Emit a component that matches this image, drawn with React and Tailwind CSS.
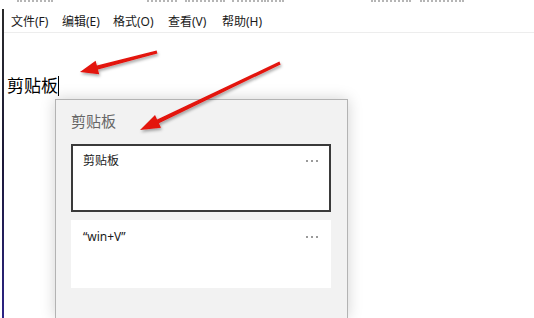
import React from "react";

const menus = [
    { label: "文件(F)", w: "w-[51px]" },
    { label: "编辑(E)", w: "w-[51px]" },
    { label: "格式(O)", w: "w-[55px]" },
    { label: "查看(V)", w: "w-[54px]" },
    { label: "帮助(H)", w: "w-auto" },
];

// faint specks left over from a line of text cut off at the top edge
const specks = [
    [17, 36], [147, 30], [185, 40], [232, 31], [264, 20], [371, 40], [420, 44],
];

function Dots() {
    return (
        <div className="flex gap-[3px] mt-[7px]">
            <span className="w-[2px] h-[2px] bg-[#9a9a9a]" />
            <span className="w-[2px] h-[2px] bg-[#9a9a9a]" />
            <span className="w-[2px] h-[2px] bg-[#9a9a9a]" />
        </div>
    );
}

function ClipCard({ text, active }) {
    return (
        <div
            className={
                "w-[260px] h-[68px] bg-white border-2 flex justify-between pl-[10px] pr-[11px] pt-[7px] " +
                (active ? "border-[#3a3a3a]" : "border-white")
            }
        >
            <span className="text-[12px] leading-[16px] text-[#1a1a1a]">{text}</span>
            <Dots />
        </div>
    );
}

function Arrows() {
    return (
        <svg className="absolute left-0 top-0 pointer-events-none" width="534" height="318">
            <defs>
                <filter id="sh" x="-20%" y="-20%" width="140%" height="160%">
                    <feDropShadow dx="1" dy="2" stdDeviation="1.5" floodColor="#000" floodOpacity="0.35" />
                </filter>
            </defs>
            <g fill="#e3120f" filter="url(#sh)">
                <polygon points="156.6,50.5 96.9,65.6 95.6,60.7 80,72 99.2,74.3 97.9,69.4 157.4,53.5" />
                <polygon points="279.4,61.6 157.1,119.6 155,115.1 140,130 161,127.7 158.9,123.2 280.6,64.4" />
            </g>
        </svg>
    );
}

export default function App() {
    return (
        <div className="relative w-[534px] h-[318px] overflow-hidden bg-white font-['Noto_Sans','Noto_Sans_CJK_SC',sans-serif]">
            <div className="h-[9px] flex items-start">
                {specks.map(([x, w], i) => (
                    <span
                        key={i}
                        style={{ marginLeft: i === 0 ? x : x - specks[i - 1][0] - specks[i - 1][1], width: w }}
                        className="h-[2px] border-b-2 border-dotted border-[#b5b5b5]"
                    />
                ))}
            </div>
            <div className="flex h-[309px]">
                <div className="ml-[2px] w-[2px] h-full bg-gradient-to-b from-[#2a2a2a] via-[#1c1838] to-[#2c2386]" />
                <div className="flex-1 flex flex-col">
                    <div className="h-[24px] flex items-center pt-[2px] pl-[7px] border-b border-[#ededed] text-[12px] text-[#1a1a1a]">
                        {menus.map((m) => (
                            <span key={m.label} className={m.w}>{m.label}</span>
                        ))}
                    </div>
                    <div className="mt-[42px] ml-[3px] flex items-center h-[22px]">
                        <span className="text-[17px] leading-[22px] text-black">剪贴板</span>
                        <span className="w-px h-[20px] bg-black" />
                    </div>
                    <div className="ml-[51px] mt-[2px] w-[293px] flex-1 bg-[#f2f2f2] border-l border-t border-r border-[#b3b3b3] shadow-[0_0_14px_rgba(0,0,0,0.18)] pl-[15px] pt-[11px]">
                        <div className="text-[15px] leading-[20px] text-[#666666]">剪贴板</div>
                        <div className="mt-[13px] flex flex-col gap-[8px]">
                            <ClipCard text="剪贴板" active />
                            <ClipCard text="“win+V”" />
                        </div>
                    </div>
                </div>
            </div>
            <Arrows />
        </div>
    );
}
